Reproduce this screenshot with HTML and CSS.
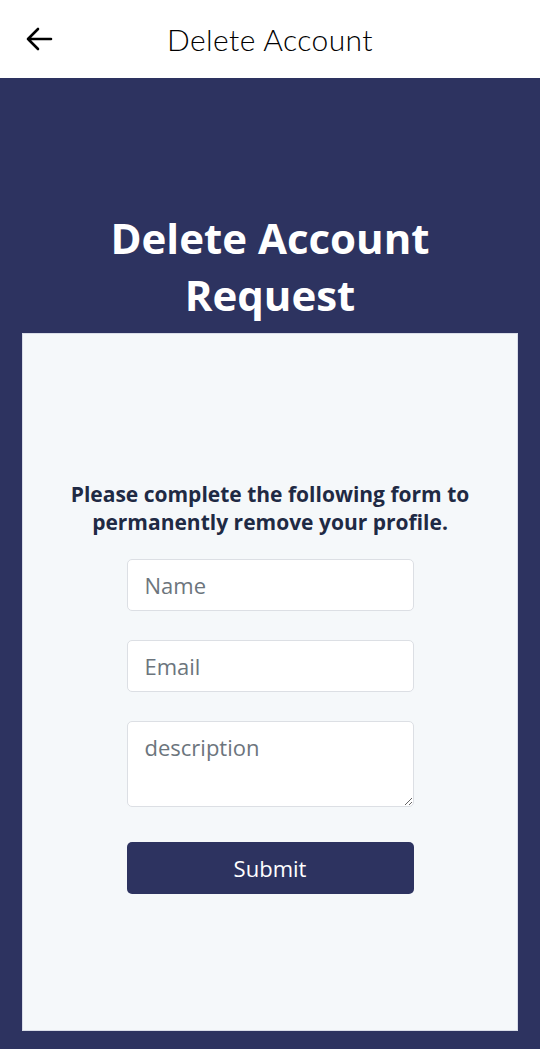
FILE: index.html
```html
<!DOCTYPE html>
<html>
<head>
<meta charset="utf-8">
<link rel="stylesheet" href="styles.css">
</head>
<body>
<header class="topbar">
  <button class="back" aria-label="Back">
    <svg width="30" height="30" viewBox="0 0 30 30"><path d="M27 15H4M14 5L4 15l10 10" fill="none" stroke="#000" stroke-width="2.6" stroke-linecap="round" stroke-linejoin="round"/></svg>
  </button>
  <div class="title">Delete Account</div>
</header>
<main class="hero">
  <h1 class="heading">Delete Account<br>Request</h1>
  <section class="card">
    <p class="lead">Please complete the following form to permanently remove your profile.</p>
    <form class="form">
      <input class="field" type="text" placeholder="Name">
      <input class="field" type="email" placeholder="Email">
      <textarea class="field area" placeholder="description"></textarea>
      <button class="submit" type="button">Submit</button>
    </form>
  </section>
</main>
</body>
</html>
```
FILE: styles.css
```css
* { box-sizing: border-box; }
html, body { margin: 0; padding: 0; }
body { width: 540px; height: 1049px; background: #2d3360; font-family: "Open Sans", sans-serif; overflow: hidden; }
.topbar { height: 78px; background: #fff; position: relative; display: flex; align-items: center; justify-content: center; }
.back { position: absolute; left: 24px; top: 24px; background: none; border: 0; padding: 0; width: 30px; height: 30px; }
.back svg { display: block; }
.title { font-family: "Lato", sans-serif; font-weight: 300; font-size: 30px; color: #000; letter-spacing: 0.4px; margin-top: 0; }
.hero { display: flex; flex-direction: column; align-items: center; padding-top: 131px; }
.heading { margin: 0; color: #fff; font-family: "Open Sans", sans-serif; font-weight: 700; font-size: 42px; line-height: 57px; text-align: center; height: 124px; }
.card { width: 496px; height: 698px; background: #f5f8fa; border: 1px solid #d9dde8; display: flex; flex-direction: column; align-items: center; padding-top: 146px; }
.lead { margin: 0; width: 450px; text-align: center; font-weight: 700; font-size: 21px; line-height: 28px; color: #1f2a44; }
.form { display: flex; flex-direction: column; width: 287px; margin-top: 23px; }
.field { width: 287px; height: 52px; border: 1px solid #dcdfe4; border-radius: 5px; background: #fff; font-family: "Open Sans", sans-serif; font-size: 22px; padding: 0 17px; color: #333; margin-bottom: 29px; outline: none; }
.field::placeholder { color: #6c757d; }
.area { height: 86px; padding: 10px 17px; resize: vertical; margin-bottom: 35px; }
.submit { height: 52px; width: 287px; background: #2d3360; color: #fff; border: 0; border-radius: 5px; font-family: "Open Sans", sans-serif; font-size: 22px; }
```
